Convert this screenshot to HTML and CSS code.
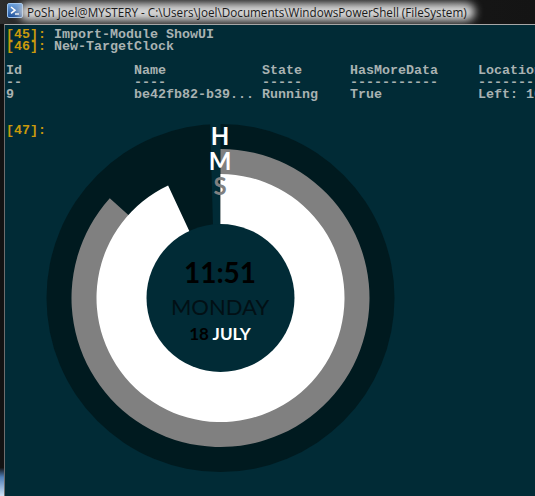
FILE: index.html
```html
<!DOCTYPE html>
<html>
<head>
<meta charset="utf-8">
<link rel="stylesheet" href="styles.css">
</head>
<body>
<div class="window">
  <div class="titlebar">
    <svg class="ps-icon" width="16" height="15" viewBox="0 0 16 15">
      <defs>
        <linearGradient id="psg" x1="0" y1="0" x2="0" y2="1">
          <stop offset="0" stop-color="#6ea4e0"/>
          <stop offset="1" stop-color="#1d4f9a"/>
        </linearGradient>
      </defs>
      <rect x="0.5" y="0.5" width="15" height="14" rx="1.5" fill="url(#psg)" stroke="#9cc3ee"/>
      <path d="M4 4 L8 7.2 L4 10.4" fill="none" stroke="#fff" stroke-width="1.6"/>
      <path d="M8 11 H12" stroke="#fff" stroke-width="1.4"/>
    </svg>
    <span class="title">PoSh Joel@MYSTERY - C:\Users\Joel\Documents\WindowsPowerShell (FileSystem)</span>
  </div>
  <div class="body">
    <div class="frame-left"></div>
    <div class="console">
<pre class="out"><span class="prompt">[45]:</span> Import-Module ShowUI
<span class="prompt">[46]:</span> New-TargetClock

Id              Name            State      HasMoreData     Location
--              ----            -----      -----------     ----------
9               be42fb82-b39... Running    True            Left: 10


<span class="prompt">[47]:</span></pre>
      <div class="clock">
        <svg class="rings" width="350" height="350" viewBox="-175.5 -175 350 350">
          <circle cx="0" cy="0" r="174" fill="#001a1f"/>
          <polygon points="-10.5,-180 0,-180 0,-72 -7.5,-72" fill="#012b36"/>
          <path d="M0 0 L0 -149 A149 149 0 1 1 -110.73 -99.70 Z" fill="#808080"/>
          <path d="M0 0 L0 -124 A124 124 0 1 1 -52.40 -112.38 Z" fill="#ffffff"/>
          <circle cx="0" cy="0" r="74" fill="#012b36"/>
        </svg>
        <div class="labels">
          <span class="lab lab-h">H</span>
          <span class="lab lab-m">M</span>
          <span class="lab lab-s">S</span>
        </div>
        <div class="face">
          <div class="time">11:51</div>
          <div class="day">MONDAY</div>
          <div class="date"><span class="dnum">18</span> <span class="month">JULY</span></div>
        </div>
      </div>
    </div>
  </div>
</div>
</body>
</html>
```

FILE: styles.css
```css
html, body {
  margin: 0;
  padding: 0;
  background: #111;
}
.window {
  width: 535px;
  height: 496px;
  display: flex;
  flex-direction: column;
  overflow: hidden;
}
.titlebar {
  height: 24px;
  flex: none;
  display: flex;
  align-items: center;
  background: linear-gradient(to right, #2e2e2e 0, #1e1e1e 40px, #141414 100%);
}
.ps-icon {
  margin-left: 7px;
  margin-top: -3px;
  flex: none;
}
.title {
  position: relative;
  z-index: 0;
  margin-left: 4px;
  margin-top: -1px;
  font-family: "Open Sans", "Noto Sans", sans-serif;
  font-size: 11.7px;
  color: #1a1a1a;
  white-space: nowrap;
}
.title::before {
  content: "";
  position: absolute;
  left: -8px;
  right: -8px;
  top: -1px;
  bottom: -1px;
  background: #d6d6d6;
  border-radius: 10px;
  filter: blur(4px);
  z-index: -1;
}
.body {
  flex: 1;
  display: flex;
  min-height: 0;
}
.frame-left {
  width: 4px;
  flex: none;
  background: linear-gradient(to bottom, #121212 0, #121212 94%, #4f7fb8 96%, #cfe2f5 100%);
}
.console {
  flex: 1;
  position: relative;
  background: #012b36;
  border-top: 1px solid #a7a7a7;
  border-left: 1px solid #6d6d6d;
  overflow: hidden;
}
.out {
  margin: 0;
  padding: 4px 0 0 1px;
  font-family: "Liberation Mono", monospace;
  font-weight: bold;
  font-size: 13.333px;
  line-height: 12px;
  color: #a9b2b2;
  white-space: pre;
}
.prompt {
  color: #c99a0c;
}
.clock {
  position: absolute;
  left: 40px;
  top: 98px;
  width: 350px;
  height: 350px;
}
.rings {
  display: block;
}
.labels {
  position: absolute;
  left: 162px;
  top: 0;
  width: 26px;
  display: flex;
  flex-direction: column;
  align-items: center;
  font-family: Lato, "Open Sans", sans-serif;
  font-weight: bold;
  font-size: 24px;
  line-height: 25px;
}
.lab-h, .lab-m { color: #ffffff; }
.lab-s { color: #808080; }
.face {
  position: absolute;
  left: 0;
  right: 0;
  top: 135px;
  display: flex;
  flex-direction: column;
  align-items: center;
  font-family: Lato, "Open Sans", sans-serif;
  color: #000;
}
.time {
  font-size: 28px;
  font-weight: bold;
  line-height: 1;
}
.day {
  margin-top: 10px;
  font-size: 22px;
  line-height: 1;
  color: #021015;
}
.date {
  margin-top: 7px;
  font-size: 17px;
  font-weight: bold;
  line-height: 1;
}
.month { color: #fff; }
```
